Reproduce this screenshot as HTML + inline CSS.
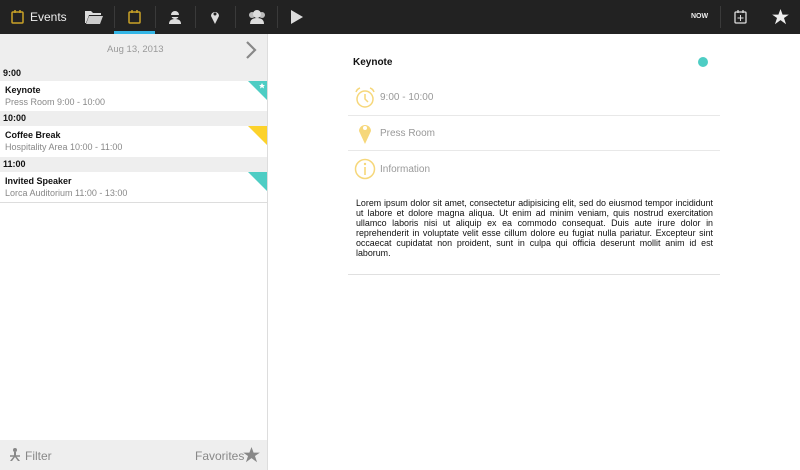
<!DOCTYPE html><html><head><style>
body{margin:0;width:800px;height:470px;font-family:"Liberation Sans",sans-serif;position:relative;overflow:hidden;background:#fff}
.a{position:absolute}
.top{left:0;top:0;width:800px;height:34px;background:#222}
.sep{width:1px;height:22px;top:6px;background:#3a3a3a}
.lp{left:0;top:34px;width:267px;height:436px;background:#fff;border-right:1px solid #ddd}
.hdr{left:0;width:267px;height:15px;background:#eee;font-size:9px;font-weight:bold;color:#111;line-height:15px;text-indent:3px}
.it{left:0;width:267px;height:30px;background:#fff}
.t1{left:5px;top:4px;font-size:9px;font-weight:bold;color:#111}
.t2{left:5px;top:16px;font-size:9px;color:#888}
.g{color:#999;font-size:10px}
</style></head><body>
<div class="a top"></div>
<svg class="a" style="left:11px;top:10px" width="13" height="14"><rect x="1" y="2" width="11" height="11" rx="1" fill="none" stroke="#c9a227" stroke-width="1.5"/><line x1="4" y1="0" x2="4" y2="3" stroke="#c9a227" stroke-width="1.5"/><line x1="9" y1="0" x2="9" y2="3" stroke="#c9a227" stroke-width="1.5"/></svg>
<div class="a" style="left:30px;top:10px;color:#eee;font-size:12px">Events</div>
<svg class="a" style="left:85px;top:10px" width="18" height="14"><path d="M0 1h6l2 2h8v2H4L1 13H0z" fill="#ddd"/><path d="M4 6h14l-3 8H1z" fill="#ccc"/></svg>
<div class="a sep" style="left:114px"></div>
<svg class="a" style="left:128px;top:10px" width="13" height="14"><rect x="1" y="2" width="11" height="11" rx="1" fill="none" stroke="#c9a227" stroke-width="1.5"/><line x1="4" y1="0" x2="4" y2="3" stroke="#c9a227" stroke-width="1.5"/><line x1="9" y1="0" x2="9" y2="3" stroke="#c9a227" stroke-width="1.5"/></svg>
<div class="a" style="left:114px;top:31px;width:41px;height:3px;background:#33b5e5"></div>
<div class="a sep" style="left:155px"></div>
<svg class="a" style="left:168px;top:10px" width="14" height="14"><circle cx="7" cy="5" r="4" fill="#ddd"/><rect x="2" y="5" width="10" height="2" fill="#222"/><path d="M1 14q0-5 6-5t6 5z" fill="#ddd"/></svg>
<div class="a sep" style="left:195px"></div>
<svg class="a" style="left:210px;top:9px" width="10" height="15"><path d="M5 15L1 7a4 4 0 1 1 8 0z" fill="#ddd"/><circle cx="5" cy="5" r="1.5" fill="#222"/></svg>
<div class="a sep" style="left:235px"></div>
<svg class="a" style="left:247px;top:10px" width="20" height="14"><circle cx="5" cy="5" r="3" fill="#bbb"/><circle cx="15" cy="5" r="3" fill="#bbb"/><circle cx="10" cy="4" r="4" fill="#ddd"/><path d="M3 14q0-6 7-6t7 6z" fill="#ddd"/></svg>
<div class="a sep" style="left:277px"></div>
<svg class="a" style="left:290px;top:10px" width="14" height="14"><path d="M1 0L13 7L1 14z" fill="#ddd"/></svg>
<div class="a" style="left:691px;top:13px;color:#eee;font-size:7px;font-weight:bold">NOW</div>
<div class="a sep" style="left:720px"></div>
<svg class="a" style="left:734px;top:10px" width="13" height="14"><rect x="1" y="2" width="11" height="11" rx="1" fill="none" stroke="#ddd" stroke-width="1.3"/><line x1="4" y1="0" x2="4" y2="3" stroke="#ddd" stroke-width="1.3"/><line x1="9" y1="0" x2="9" y2="3" stroke="#ddd" stroke-width="1.3"/><path d="M6.5 5v6M3.5 8h6" stroke="#ddd"/></svg>
<svg class="a" style="left:772px;top:9px" width="17" height="16" viewBox="0 0 24 23"><path d="M12 0l3 8h9l-7 5 3 9-8-6-8 6 3-9-7-5h9z" fill="#eee"/></svg>

<div class="a lp"></div>
<div class="a" style="left:0;top:34px;width:267px;height:32px;background:#eee"></div>
<div class="a g" style="left:107px;top:44px;font-size:9.5px">Aug 13, 2013</div>
<svg class="a" style="left:245px;top:40px" width="12" height="20"><path d="M2 2l8 8-8 8" fill="none" stroke="#888" stroke-width="2.2"/></svg>
<div class="a hdr" style="top:66px">9:00</div>
<div class="a it" style="top:81px"><div class="a t1">Keynote</div><div class="a t2">Press Room 9:00 - 10:00</div>
<svg class="a" style="left:248px;top:0" width="19" height="19"><path d="M0 0h19v19z" fill="#4ecdc4"/><path d="M14 2l1 2h2l-1.5 1.3.6 2.2L14 6.3l-2 1.2.6-2.2L11 4h2z" fill="#fff"/></svg></div>
<div class="a hdr" style="top:111px">10:00</div>
<div class="a it" style="top:126px"><div class="a t1">Coffee Break</div><div class="a t2">Hospitality Area 10:00 - 11:00</div>
<svg class="a" style="left:248px;top:0" width="19" height="19"><path d="M0 0h19v19z" fill="#fcd22b"/></svg></div>
<div class="a hdr" style="top:157px">11:00</div>
<div class="a it" style="top:172px;border-bottom:1px solid #ddd"><div class="a t1">Invited Speaker</div><div class="a t2">Lorca Auditorium 11:00 - 13:00</div>
<svg class="a" style="left:248px;top:0" width="19" height="19"><path d="M0 0h19v19z" fill="#4ecdc4"/></svg></div>
<div class="a" style="left:0;top:440px;width:267px;height:30px;background:#eee"></div>
<svg class="a" style="left:9px;top:448px" width="12" height="14"><circle cx="6" cy="2" r="2" fill="#888"/><path d="M5 4h2v4l4 5h-2L6 9 3 13H1l4-5z" fill="#888"/><path d="M1 8h10" stroke="#888" stroke-width="1.5"/></svg>
<div class="a" style="left:25px;top:449px;color:#888;font-size:12px">Filter</div>
<div class="a" style="left:195px;top:449px;color:#888;font-size:12px">Favorites</div>
<svg class="a" style="left:243px;top:447px" width="17" height="16" viewBox="0 0 24 23"><path d="M12 0l3 8h9l-7 5 3 9-8-6-8 6 3-9-7-5h9z" fill="#888"/></svg>

<div class="a" style="left:353px;top:57px;font-size:10px;font-weight:bold;color:#111">Keynote</div>
<div class="a" style="left:698px;top:57px;width:10px;height:10px;border-radius:50%;background:#4ecdc4"></div>
<svg class="a" style="left:354px;top:87px" width="22" height="21"><path d="M2 5q1-3 4-4M20 5q-1-3-4-4" fill="none" stroke="#f6d77a" stroke-width="1.5"/><circle cx="11" cy="12" r="8" fill="none" stroke="#f6d77a" stroke-width="1.5"/><path d="M11 7v5l3 3" fill="none" stroke="#f6d77a" stroke-width="1.5"/></svg>
<div class="a" style="left:380px;top:92px;font-size:10px;color:#999">9:00 - 10:00</div>
<div class="a" style="left:348px;top:115px;width:372px;height:1px;background:#e8e8e8"></div>
<svg class="a" style="left:358px;top:122px" width="14" height="22"><path d="M7 22L1 9a6 6 0 1 1 12 0z" fill="#f6d77a"/><circle cx="7" cy="6" r="2" fill="#fff"/></svg>
<div class="a" style="left:380px;top:128px;font-size:10px;color:#999">Press Room</div>
<div class="a" style="left:348px;top:150px;width:372px;height:1px;background:#e8e8e8"></div>
<svg class="a" style="left:354px;top:158px" width="22" height="22"><circle cx="11" cy="11" r="9.5" fill="none" stroke="#f6d77a" stroke-width="1.5"/><circle cx="11" cy="6" r="1.2" fill="#f6d77a"/><path d="M11 9v8" stroke="#f6d77a" stroke-width="1.6"/></svg>
<div class="a" style="left:380px;top:164px;font-size:10px;color:#999">Information</div>
<div class="a" style="left:356px;top:198px;width:357px;font-size:8.9px;line-height:10px;color:#111;text-align:justify">Lorem ipsum dolor sit amet, consectetur adipisicing elit, sed do eiusmod tempor incididunt ut labore et dolore magna aliqua. Ut enim ad minim veniam, quis nostrud exercitation ullamco laboris nisi ut aliquip ex ea commodo consequat. Duis aute irure dolor in reprehenderit in voluptate velit esse cillum dolore eu fugiat nulla pariatur. Excepteur sint occaecat cupidatat non proident, sunt in culpa qui officia deserunt mollit anim id est laborum.</div>
<div class="a" style="left:348px;top:274px;width:372px;height:1px;background:#e0e0e0"></div>
</body></html>
